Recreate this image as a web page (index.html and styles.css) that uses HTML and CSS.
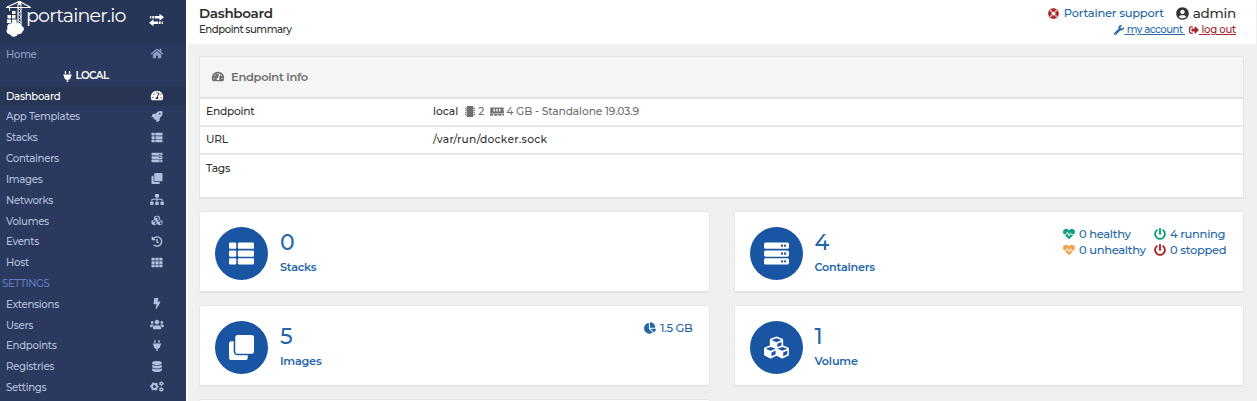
FILE: index.html
```html
<!DOCTYPE html>
<html lang="en">
<head>
<meta charset="utf-8">
<title>Portainer</title>
<link rel="stylesheet" href="styles.css">
</head>
<body>
<svg class="sprite" aria-hidden="true">
<symbol id="home" viewBox="0 0 576 512"><path d="M280.37 148.26L96 300.11V464a16 16 0 0 0 16 16l112.06-.29a16 16 0 0 0 15.92-16V368a16 16 0 0 1 16-16h64a16 16 0 0 1 16 16v95.64a16 16 0 0 0 16 16.05L464 480a16 16 0 0 0 16-16V300L295.67 148.26a12.19 12.19 0 0 0-15.3 0zM571.6 251.47L488 182.56V44.05a12 12 0 0 0-12-12h-56a12 12 0 0 0-12 12v72.61L318.47 43a48 48 0 0 0-61 0L4.34 251.47a12 12 0 0 0-1.6 16.9l25.5 31A12 12 0 0 0 45.15 301l235.22-193.74a12.19 12.19 0 0 1 15.3 0L530.9 301a12 12 0 0 0 16.9-1.6l25.5-31a12 12 0 0 0-1.7-16.93z"/></symbol>
<symbol id="plug" viewBox="0 0 384 512"><path d="M320,32a32,32,0,0,0-64,0v96h64Zm48,128H16A16,16,0,0,0,0,176v32a16,16,0,0,0,16,16H32v32A160.07,160.07,0,0,0,160,412.8V512h64V412.8A160.07,160.07,0,0,0,352,256V224h16a16,16,0,0,0,16-16V176A16,16,0,0,0,368,160ZM128,32a32,32,0,0,0-64,0v96h64Z"/></symbol>
<symbol id="gauge" viewBox="0 0 576 512"><path d="M288 32C128.94 32 0 160.94 0 320c0 52.8 14.25 102.26 39.06 144.8 5.61 9.62 16.3 15.2 27.44 15.2h443c11.14 0 21.83-5.58 27.44-15.2C561.75 422.26 576 372.8 576 320c0-159.06-128.94-288-288-288zm0 64c14.71 0 26.58 10.13 30.32 23.65-1.11 2.26-2.64 4.23-3.45 6.67l-9.22 27.67c-5.13 3.49-10.97 6.01-17.64 6.01-17.67 0-32-14.33-32-32S270.33 96 288 96zM96 384c-17.67 0-32-14.33-32-32s14.33-32 32-32 32 14.33 32 32-14.33 32-32 32zm48-160c-17.67 0-32-14.33-32-32s14.33-32 32-32 32 14.33 32 32-14.33 32-32 32zm246.77-72.41l-61.33 184C343.13 347.33 352 364.54 352 384c0 11.72-3.38 22.55-8.88 32H232.88c-5.5-9.45-8.88-20.28-8.88-32 0-33.94 26.5-61.43 59.9-63.59l61.34-184.01c4.17-12.56 17.73-19.45 30.36-15.17 12.57 4.19 19.35 17.79 15.17 30.36zm14.66 57.2l15.52-46.55c3.47-1.29 7.13-2.23 11.05-2.23 17.67 0 32 14.33 32 32s-14.33 32-32 32c-11.38-.01-20.89-6.28-26.57-15.22zM480 384c-17.67 0-32-14.33-32-32s14.33-32 32-32 32 14.33 32 32-14.33 32-32 32z"/></symbol>
<symbol id="rocket" viewBox="0 0 512 512"><path d="M505.12 19.09c-1.19-5.53-6.66-11-12.2-12.18C460.716 0 435.507 0 410.407 0 307.175 0 245.269 55.203 199.052 128H94.838c-16.348.016-35.557 11.875-42.887 26.484L2.516 253.297A28.4 28.4 0 0 0 0 264a24 24 0 0 0 24 24h103.816l-22.474 22.469c-11.366 11.361-12.997 32.258 0 45.25l50.904 50.906c11.156 11.187 32.156 13.156 45.277 0l22.475-22.469V488a24 24 0 0 0 24 24 28.56 28.56 0 0 0 10.707-2.516l98.728-49.39c14.63-7.297 26.508-26.5 26.508-42.86V312.797c72.598-46.313 128.035-108.406 128.035-211.094.1-25.203.1-50.406-6.856-82.61zM384.04 168A40 40 0 1 1 424.05 128a40 40 0 0 1-40.01 40z"/></symbol>
<symbol id="list" viewBox="0 0 512 512"><rect y="32" width="149" height="128" rx="24"/><rect y="192" width="149" height="128" rx="24"/><rect y="352" width="149" height="128" rx="24"/><rect x="181" y="32" width="331" height="128" rx="24"/><rect x="181" y="192" width="331" height="128" rx="24"/><rect x="181" y="352" width="331" height="128" rx="24"/></symbol>
<symbol id="server" viewBox="0 0 512 512"><path fill-rule="evenodd" d="M32 32h448a32 32 0 0 1 32 32v64a32 32 0 0 1-32 32H32a32 32 0 0 1-32-32V64a32 32 0 0 1 32-32zm336 40a24 24 0 1 0 0 48 24 24 0 0 0 0-48zm64 0a24 24 0 1 0 0 48 24 24 0 0 0 0-48zM32 192h448a32 32 0 0 1 32 32v64a32 32 0 0 1-32 32H32a32 32 0 0 1-32-32v-64a32 32 0 0 1 32-32zm336 40a24 24 0 1 0 0 48 24 24 0 0 0 0-48zm64 0a24 24 0 1 0 0 48 24 24 0 0 0 0-48zM32 352h448a32 32 0 0 1 32 32v64a32 32 0 0 1-32 32H32a32 32 0 0 1-32-32v-64a32 32 0 0 1 32-32zm336 40a24 24 0 1 0 0 48 24 24 0 0 0 0-48zm64 0a24 24 0 1 0 0 48 24 24 0 0 0 0-48z"/></symbol>
<symbol id="clone" viewBox="0 0 512 512"><path d="M464 0c26.51 0 48 21.49 48 48v288c0 26.51-21.49 48-48 48H176c-26.51 0-48-21.49-48-48V48c0-26.51 21.49-48 48-48h288M176 416c-44.112 0-80-35.888-80-80V128H48c-26.51 0-48 21.49-48 48v288c0 26.51 21.49 48 48 48h288c26.51 0 48-21.49 48-48v-48H176z"/></symbol>
<symbol id="sitemap" viewBox="0 0 640 512"><path d="M128 352H32c-17.67 0-32 14.33-32 32v96c0 17.67 14.33 32 32 32h96c17.67 0 32-14.33 32-32v-96c0-17.67-14.33-32-32-32zm-24-80h192v48h48v-48h192v48h48v-57.59c0-21.17-17.23-38.41-38.41-38.41H344v-64h40c17.67 0 32-14.33 32-32V32c0-17.67-14.33-32-32-32H256c-17.67 0-32 14.33-32 32v96c0 17.67 14.33 32 32 32h40v64H94.41C73.23 224 56 241.23 56 262.41V320h48v-48zm264 80h-96c-17.67 0-32 14.33-32 32v96c0 17.67 14.33 32 32 32h96c17.67 0 32-14.33 32-32v-96c0-17.67-14.33-32-32-32zm240 0h-96c-17.67 0-32 14.33-32 32v96c0 17.67 14.33 32 32 32h96c17.67 0 32-14.33 32-32v-96c0-17.67-14.33-32-32-32z"/></symbol>
<symbol id="cubes" viewBox="0 0 512 512"><path d="M488.6 250.2L392 214V105.5c0-15-9.3-28.4-23.4-33.7l-100-37.5c-8.1-3.1-17.1-3.1-25.3 0l-100 37.5c-14.1 5.3-23.4 18.7-23.4 33.7V214l-96.6 36.2C9.3 255.5 0 268.9 0 283.9V394c0 13.6 7.7 26.1 19.9 32.2l100 50c10.1 5.1 22.1 5.1 32.2 0l103.9-52 103.9 52c10.1 5.1 22.1 5.1 32.2 0l100-50c12.2-6.1 19.9-18.6 19.9-32.2V283.9c0-15-9.3-28.4-23.4-33.7zM358 214.8l-85 31.9v-68.2l85-37v73.3zM154 104.1l102-38.2 102 38.2v.6l-102 41.4-102-41.4v-.6zm84 291.1l-85 42.5v-79.1l85-38.8v75.4zm0-112l-102 41.4-102-41.4v-.6l102-38.2 102 38.2v.6zm240 112l-85 42.5v-79.1l85-38.8v75.4zm0-112l-102 41.4-102-41.4v-.6l102-38.2 102 38.2v.6z"/></symbol>
<symbol id="history" viewBox="0 0 512 512"><path d="M504 255.531c.253 136.64-111.18 248.372-247.82 248.468-59.015.042-113.223-20.53-155.822-54.911-11.077-8.94-11.905-25.541-1.839-35.607l11.267-11.267c8.609-8.609 22.353-9.551 31.891-1.984C173.062 425.135 212.781 440 256 440c101.705 0 184-82.311 184-184 0-101.705-82.311-184-184-184-48.814 0-93.149 18.969-126.068 49.932l50.754 50.754c10.08 10.08 2.941 27.314-11.313 27.314H24c-8.837 0-16-7.163-16-16V38.627c0-14.254 17.234-21.393 27.314-11.314l49.372 49.372C129.209 34.136 189.552 8 256 8c136.81 0 247.747 110.78 248 247.531zm-180.912 78.784l9.823-12.63c8.138-10.463 6.253-25.542-4.21-33.679L288 256.349V152c0-13.255-10.745-24-24-24h-16c-13.255 0-24 10.745-24 24v135.651l65.409 50.874c10.463 8.137 25.541 6.253 33.679-4.21z"/></symbol>
<symbol id="grid" viewBox="0 0 512 512"><path d="M24 32h101a24 24 0 0 1 24 24v80a24 24 0 0 1-24 24H24a24 24 0 0 1-24-24V56a24 24 0 0 1 24-24zM0 192h149v128H0zM24 352h125v128H24a24 24 0 0 1-24-24v-104zM181 32h150v128H181zM181 192h150v128H181zM181 352h150v128H181zM363 32h125a24 24 0 0 1 24 24v104H363zM363 192h149v128H363zM363 352h149v104a24 24 0 0 1-24 24H363z"/></symbol>
<symbol id="bolt" viewBox="0 0 320 512"><path d="M296 160H180.6l42.6-129.8C227.2 15 215.7 0 200 0H56C44 0 33.8 8.9 32.2 20.8l-32 240C-1.7 275.2 9.5 288 24 288h118.7L96.6 482.5c-3.6 15.2 8 29.5 23.3 29.5 8.4 0 16.4-4.4 20.8-12l176-304c9.3-15.9-2.2-36-20.7-36z"/></symbol>
<symbol id="users" viewBox="0 0 640 512"><path d="M96 224c35.3 0 64-28.7 64-64s-28.7-64-64-64-64 28.7-64 64 28.7 64 64 64zm448 0c35.3 0 64-28.7 64-64s-28.7-64-64-64-64 28.7-64 64 28.7 64 64 64zm32 32h-64c-17.6 0-33.5 7.1-45.1 18.6 40.3 22.1 68.9 62 75.1 109.4h66c17.7 0 32-14.3 32-32v-32c0-35.3-28.7-64-64-64zm-256 0c61.9 0 112-50.1 112-112S381.9 32 320 32 208 82.1 208 144s50.1 112 112 112zm76.8 32h-8.3c-20.8 10-43.9 16-68.5 16s-47.6-6-68.5-16h-8.3C179.6 288 128 339.6 128 403.2V432c0 26.5 21.5 48 48 48h288c26.5 0 48-21.5 48-48v-28.8c0-63.6-51.6-115.2-115.2-115.2zm-223.7-13.4C161.5 263.1 145.6 256 128 256H64c-35.3 0-64 28.7-64 64v32c0 17.7 14.3 32 32 32h65.9c6.3-47.4 34.9-87.3 75.2-109.4z"/></symbol>
<symbol id="database" viewBox="0 0 448 512"><path d="M448 73.143v45.714C448 159.143 347.667 192 224 192S0 159.143 0 118.857V73.143C0 32.857 100.333 0 224 0s224 32.857 224 73.143zM448 176v102.857C448 319.143 347.667 352 224 352S0 319.143 0 278.857V176c48.125 33.143 136.208 48.572 224 48.572S399.874 209.143 448 176zm0 160v102.857C448 479.143 347.667 512 224 512S0 479.143 0 438.857V336c48.125 33.143 136.208 48.572 224 48.572S399.874 369.143 448 336z"/></symbol>
<symbol id="cogs" viewBox="0 0 640 512"><g fill="none" stroke="currentColor"><circle cx="200" cy="256" r="115" stroke-width="90"/><circle cx="200" cy="256" r="172" stroke-width="56" stroke-dasharray="90 90.1" stroke-dashoffset="45"/><circle cx="520" cy="120" r="60" stroke-width="58"/><circle cx="520" cy="120" r="94" stroke-width="40" stroke-dasharray="49 49.400"/><circle cx="520" cy="392" r="60" stroke-width="58"/><circle cx="520" cy="392" r="94" stroke-width="40" stroke-dasharray="49 49.400"/></g></symbol>
<symbol id="lifering" viewBox="0 0 512 512"><path d="M256 8C119.033 8 8 119.033 8 256s111.033 248 248 248 248-111.033 248-248S392.967 8 256 8zm173.696 119.559l-63.399 63.399c-10.987-18.559-26.67-34.252-45.255-45.255l63.399-63.399a218.396 218.396 0 0 1 45.255 45.255zM256 352c-53.019 0-96-42.981-96-96s42.981-96 96-96 96 42.981 96 96-42.981 96-96 96zM127.559 82.304l63.399 63.399c-18.559 10.987-34.252 26.67-45.255 45.255l-63.399-63.399a218.372 218.372 0 0 1 45.255-45.255zM82.304 384.441l63.399-63.399c10.987 18.559 26.67 34.252 45.255 45.255l-63.399 63.399a218.396 218.396 0 0 1-45.255-45.255zm302.137 45.255l-63.399-63.399c18.559-10.987 34.252-26.67 45.255-45.255l63.399 63.399a218.403 218.403 0 0 1-45.255 45.255z"/></symbol>
<symbol id="user" viewBox="0 0 496 512"><path d="M248 8C111 8 0 119 0 256s111 248 248 248 248-111 248-248S385 8 248 8zm0 96c48.6 0 88 39.4 88 88s-39.4 88-88 88-88-39.4-88-88 39.4-88 88-88zm0 344c-58.7 0-111.3-26.6-146.5-68.2 18.8-35.4 55.6-59.8 98.5-59.8 2.4 0 4.8.4 7.1 1.1 13 4.2 26.6 6.9 40.9 6.9 14.3 0 28-2.7 40.9-6.9 2.3-.7 4.7-1.1 7.1-1.1 42.9 0 79.7 24.4 98.5 59.8C359.3 421.4 306.7 448 248 448z"/></symbol>
<symbol id="wrench" viewBox="0 0 512 512"><path d="M507.73 109.1c-2.24-9.03-13.54-12.09-20.12-5.51l-74.36 74.36-67.88-11.31-11.31-67.88 74.36-74.36c6.62-6.62 3.43-17.9-5.66-20.16-47.38-11.74-99.55.91-136.58 37.93-39.64 39.64-50.55 97.1-34.05 147.2L18.74 402.76c-24.99 24.99-24.99 65.51 0 90.5 24.99 24.99 65.51 24.99 90.5 0l213.21-213.21c50.12 16.71 107.47 5.68 147.37-34.22 37.07-37.07 49.7-89.32 37.91-136.73zM64 472c-13.25 0-24-10.75-24-24 0-13.26 10.75-24 24-24s24 10.74 24 24c0 13.25-10.75 24-24 24z"/></symbol>
<symbol id="signout" viewBox="0 0 512 512"><path d="M497 273L329 441c-15 15-41 4.5-41-17v-96H152c-13.3 0-24-10.7-24-24v-96c0-13.3 10.7-24 24-24h136V88c0-21.4 25.9-32 41-17l168 168c9.3 9.4 9.3 24.6 0 34zM192 436v-40c0-6.6-5.4-12-12-12H96c-17.7 0-32-14.3-32-32V160c0-17.7 14.3-32 32-32h84c6.6 0 12-5.4 12-12V76c0-6.6-5.4-12-12-12H96c-53 0-96 43-96 96v192c0 53 43 96 96 96h84c6.6 0 12-5.4 12-12z"/></symbol>
<symbol id="heart" viewBox="0 0 512 512"><path d="M320.2 243.8l-49.7 99.4c-6 12.1-23.4 11.7-28.9-.6l-56.9-126.3-30 71.7H60.6l182.5 186.5c7.1 7.3 18.6 7.3 25.7 0L451.4 288H342.3l-22.1-44.2zM473.7 73.9l-2.4-2.5c-51.5-52.6-135.8-52.6-187.4 0L256 100l-27.9-28.5c-51.5-52.7-135.9-52.7-187.4 0l-2.4 2.4C-10.4 123.7-12.5 203 31 256h102.4l35.9-86.2c5.4-12.9 23.6-13.1 29.3-.4l58.2 129.3 49-97.9c5.9-11.8 22.7-11.8 28.6 0l27.6 55.2H481c43.5-53 41.4-132.3-7.3-182.1z"/></symbol>
<symbol id="power" viewBox="0 0 512 512"><path d="M400 54.1c63 45 104 118.6 104 201.9 0 136.8-110.8 247.7-247.5 248C120 504.3 8.2 393 8 256.4 7.9 173.1 48.9 99.3 111.8 54.2c11.7-8.3 28-4.8 35 7.7L162.6 90c5.9 10.5 3.1 23.8-6.6 31-41.5 30.8-68 79.6-68 134.9-.1 92.3 74.5 168.1 168 168.1 91.6 0 168.6-74.2 168-169.1-.3-51.8-24.7-101.8-68.1-134-9.7-7.2-12.4-20.5-6.5-30.9l15.8-28.1c7-12.4 23.2-16.1 34.8-7.8zM296 264V24c0-13.3-10.7-24-24-24h-32c-13.3 0-24 10.7-24 24v240c0 13.3 10.7 24 24 24h32c13.3 0 24-10.7 24-24z"/></symbol>
<symbol id="pie" viewBox="0 0 544 512"><path d="M527.79 288H290.5l158.03 158.03c6.04 6.04 15.98 6.53 22.19.68 38.7-36.46 65.32-85.61 73.13-140.86 1.34-9.46-6.51-17.85-16.06-17.85zm-15.83-64.8C503.72 103.74 408.26 8.28 288.8.04 279.68-.59 272 7.1 272 16.24V240h223.77c9.14 0 16.82-7.68 16.19-16.8zM224 288V50.71c0-9.55-8.39-17.4-17.84-16.06C86.99 51.49-4.1 155.6.14 280.37 4.5 408.51 114.83 513.59 243.03 511.98c50.4-.63 96.97-16.87 135.26-44.03 7.9-5.6 8.42-17.23 1.57-24.08L224 288z"/></symbol>
<symbol id="chip" viewBox="0 0 512 512"><rect x="96" width="320" height="512" rx="48"/><path d="M24 86h48v52H24zM24 182h48v52H24zM24 278h48v52H24zM24 374h48v52H24zM440 86h48v52h-48zM440 182h48v52h-48zM440 278h48v52h-48zM440 374h48v52h-48z"/></symbol>
<symbol id="memory" viewBox="0 0 640 512"><path fill-rule="evenodd" d="M0 130V96a32 32 0 0 1 32-32h576a32 32 0 0 1 32 32v34c-38 16-38 76 0 92v98H0v-98c38-16 38-76 0-92zm160-2v128h64V128zm128 0v128h64V128zm128 0v128h64V128zM0 352h640v96h-64v-48h-64v48H384v-48h-64v48H192v-48h-64v48H0z"/></symbol>
</svg>

<div class="app">
  <aside class="sidebar">
    <header class="brand">
      <svg class="logo" width="36" height="40" viewBox="0 0 36 40">
        <g fill="none" stroke="#fff">
          <path d="M18 4v22M21 4v22" stroke-width="1.1"/>
          <path d="M18 8l3 3-3 3 3 3-3 3 3 3" stroke-width=".8"/>
          <path d="M6 7.500h25M7 7l12.500-5.500L30 7" stroke-width="1.2"/>
          <path d="M9.500 8v3" stroke-width="1"/>
        </g>
        <g fill="#fff">
          <path d="M18 1h3v4h-3z"/>
          <path d="M12 11h3.500v3H12zM7.500 15h3.500v3.500H7.500zM12 15h3.500v3.500H12zM7 19.500h4v3.500H7zM12 19.500h4.500v3.500H12z"/>
          <path d="M10 34.500a3.500 3.500 0 0 1-2.500-6 3.500 3.500 0 0 1 3.500-5 4 4 0 0 1 6-.5 3.500 3.500 0 0 1 4.500 3 3 3 0 0 1 1 5.500 3.500 3.500 0 0 1-4.500 2.500 4.500 4.500 0 0 1-8 .5z"/>
        </g>
      </svg>
      <span class="logo-text">portainer.io</span>
      <svg class="toggle" width="15" height="14" viewBox="0 0 15 14"><path fill="#fff" d="M1 3h1.300v2.500H1zM3.300 3h2v2.500h-2zM6 3h4.500V.7L15 4.200l-4.500 3.600V5.500H6zM14 8.500h-1.300V11H14zM11.700 8.500h-2V11h2zM9 8.500H4.500V6.200L0 9.700l4.500 3.600V11H9z"/></svg>
    </header>
    <nav class="menu">
      <a class="item home">Home<svg class="fa"><use href="#home"/></svg></a>
      <div class="endpoint"><svg class="fa"><use href="#plug"/></svg>LOCAL</div>
      <a class="item active">Dashboard<svg class="fa"><use href="#gauge"/></svg></a>
      <a class="item">App Templates<svg class="fa"><use href="#rocket"/></svg></a>
      <a class="item">Stacks<svg class="fa"><use href="#list"/></svg></a>
      <a class="item">Containers<svg class="fa"><use href="#server"/></svg></a>
      <a class="item">Images<svg class="fa"><use href="#clone"/></svg></a>
      <a class="item">Networks<svg class="fa"><use href="#sitemap"/></svg></a>
      <a class="item">Volumes<svg class="fa"><use href="#cubes"/></svg></a>
      <a class="item">Events<svg class="fa"><use href="#history"/></svg></a>
      <a class="item">Host<svg class="fa"><use href="#grid"/></svg></a>
      <div class="section">SETTINGS</div>
      <a class="item">Extensions<svg class="fa"><use href="#bolt"/></svg></a>
      <a class="item">Users<svg class="fa"><use href="#users"/></svg></a>
      <a class="item">Endpoints<svg class="fa"><use href="#plug"/></svg></a>
      <a class="item">Registries<svg class="fa"><use href="#database"/></svg></a>
      <a class="item">Settings<svg class="fa"><use href="#cogs"/></svg></a>
    </nav>
  </aside>

  <main class="main">
    <header class="topbar">
      <div>
        <div class="title">Dashboard</div>
        <div class="subtitle">Endpoint summary</div>
      </div>
      <div class="account">
        <div class="account-row">
          <a class="support"><svg class="fa red"><use href="#lifering"/></svg>Portainer support</a>
          <span class="admin"><svg class="fa"><use href="#user"/></svg>admin</span>
        </div>
        <div class="account-links">
          <a class="link"><svg class="fa"><use href="#wrench"/></svg><u>&nbsp;my account&nbsp;</u></a>
          <a class="link danger"><svg class="fa"><use href="#signout"/></svg><u>&nbsp;log out</u></a>
        </div>
      </div>
    </header>

    <section class="panel">
      <div class="panel-head"><svg class="fa"><use href="#gauge"/></svg>Endpoint info</div>
      <div class="row"><span class="key">Endpoint</span><span class="val">local</span><span class="specs"><svg class="fa chip"><use href="#chip"/></svg>2<svg class="fa mem"><use href="#memory"/></svg>4 GB - Standalone 19.03.9</span></div>
      <div class="row"><span class="key">URL</span><span class="val url">/var/run/docker.sock</span></div>
      <div class="row tags"><span class="key">Tags</span></div>
    </section>

    <section class="cards">
      <a class="card"><span class="circle"><svg class="fa"><use href="#list"/></svg></span><div><div class="count">0</div><div class="label">Stacks</div></div></a>
      <a class="card"><span class="circle"><svg class="fa"><use href="#server"/></svg></span><div><div class="count">4</div><div class="label">Containers</div></div>
        <div class="stats">
          <span class="stat"><svg class="fa green"><use href="#heart"/></svg>0 healthy</span><span class="stat"><svg class="fa green"><use href="#power"/></svg>4 running</span>
          <span class="stat"><svg class="fa orange"><use href="#heart"/></svg>0 unhealthy</span><span class="stat"><svg class="fa red"><use href="#power"/></svg>0 stopped</span>
        </div>
      </a>
      <a class="card"><span class="circle"><svg class="fa"><use href="#clone"/></svg></span><div><div class="count">5</div><div class="label">Images</div></div>
        <div class="stats size"><span class="stat"><svg class="fa"><use href="#pie"/></svg>1.5 GB</span></div>
      </a>
      <a class="card"><span class="circle"><svg class="fa"><use href="#cubes"/></svg></span><div><div class="count">1</div><div class="label">Volume</div></div></a>
      <a class="card"></a>
    </section>
  </main>
</div>
</body>
</html>
```

FILE: styles.css
```css
* { box-sizing: border-box; }
body {
  margin: 0;
  height: 401px;
  overflow: hidden;
  background: #f0f0f0;
  color: #333;
  font-family: Montserrat, Inter, "Liberation Sans", sans-serif;
  font-size: 11px;
}
.sprite { position: absolute; width: 0; height: 0; }
.fa { width: 14px; height: 11px; fill: currentColor; flex: none; }
.app { display: flex; height: 401px; overflow: hidden; }

/* Sidebar */
.sidebar { width: 186px; flex: none; background: #2a395d; }
.brand {
  display: flex;
  height: 44px;
  background: #273557;
}
.logo { flex: none; }
.logo-text {
  width: 100px;
  margin-left: -10px;
  font-size: 19px;
  line-height: 32px;
  letter-spacing: -0.8px;
  color: #fff;
}
.toggle { margin: 13px 0 0 23px; flex: none; }
.menu { display: flex; flex-direction: column; }
.menu > * { height: 20.82px; line-height: 19.82px; padding-top: 1px; }
.menu .item {
  display: flex;
  align-items: center;
  justify-content: space-between;
  padding: 1px 22px 0 6px;
  color: #b2bfdc;
  font-weight: 500;
  font-size: 10.2px;
  letter-spacing: -0.3px;
}
.item .fa { margin-bottom: 2px; }
.menu .home { color: #8e9fcb; }
.menu .active { background: #273454; color: #fff; }
.menu .endpoint {
  display: flex;
  align-items: center;
  justify-content: center;
  gap: 3px;
  padding: 2px 14px 0 0;
  color: #fff;
  font-weight: 600;
  font-size: 10.3px;
  letter-spacing: -0.55px;
}
.endpoint .fa { width: 9px; height: 11px; }
.menu .section { padding-left: 2px; color: #5f7cbf; font-size: 10.3px; font-weight: 500; letter-spacing: -0.5px; }

/* Top bar */
.main { flex: 1; min-width: 0; border-left: 2px solid #fff; }
.topbar {
  display: flex;
  justify-content: space-between;
  height: 44px;
  margin-right: 1px;
  padding: 5px 20px 0 11px;
  background: #fff;
}
.title { font-size: 13.5px; line-height: 16px; font-weight: 600; color: #2d2d2d; letter-spacing: -0.3px; }
.subtitle { line-height: 17px; font-size: 10.2px; font-weight: 500; letter-spacing: -0.5px; }
.account-row { display: flex; justify-content: flex-end; align-items: center; height: 16px; gap: 12px; }
.support { display: flex; align-items: center; gap: 5px; color: #2367a8; font-size: 11.5px; font-weight: 500; letter-spacing: -0.23px; }
.support .fa { width: 11px; }
.admin { display: flex; align-items: center; gap: 4px; font-size: 13.5px; font-weight: 500; letter-spacing: -0.25px; }
.admin .fa { width: 13px; height: 13px; }
.account-links { display: flex; justify-content: flex-end; gap: 4px; line-height: 17px; }
.link { display: flex; align-items: center; color: #2b6cad; font-size: 10.2px; font-weight: 500; letter-spacing: -0.5px; }
.link .fa { width: 10px; height: 10px; }
.danger { color: #a4282c; }
.danger u { letter-spacing: -0.3px; }
.red { color: #ae2323; }
.green { color: #0fa37c; }
.orange { color: #f5a04c; }

/* Endpoint panel */
.panel {
  height: 143px;
  margin: 12px 13px 0 11px;
  background: #fff;
  border: 1px solid #e4e4e4;
  border-bottom-width: 2px;
}
.panel-head {
  display: flex;
  align-items: center;
  gap: 6px;
  height: 42px;
  padding: 0 0 1px 11px;
  background: #f5f5f5;
  border-bottom: 2px solid #e2e2e2;
  color: #6f6f6f;
  font-size: 11.5px;
  font-weight: 600;
  letter-spacing: -0.3px;
}
.row {
  display: flex;
  align-items: center;
  height: 28px;
  padding: 0 0 1px 6px;
  border-bottom: 2px solid #e8e8e8;
  color: #333;
  font-weight: 500;
  font-size: 10.7px;
  letter-spacing: -0.25px;
}
.row.tags { border-bottom: 0; padding-bottom: 2px; }
.key { width: 227px; }
.val { letter-spacing: 0; }
.url { letter-spacing: 0.27px; }
.specs { display: flex; align-items: center; color: #707070; padding-left: 5px; letter-spacing: -0.12px; }
.chip { margin-right: 1px; }
.mem { margin: 0 2px 0 6px; }

/* Summary cards */
.cards {
  display: grid;
  grid-template-columns: 1fr 1fr;
  gap: 12px 24px;
  margin: 12px 13px 0 11px;
}
.card {
  display: flex;
  align-items: flex-start;
  height: 82px;
  padding: 15px 16px 0 15px;
  background: #fff;
  border: 1px solid #e6e6e6;
  border-bottom-width: 2px;
  border-radius: 2px;
  color: #2367a8;
}
.circle {
  display: flex;
  align-items: center;
  justify-content: center;
  width: 53px;
  height: 53px;
  margin-right: 12px;
  border-radius: 50%;
  background: #1a55a3;
  color: #fff;
}
.circle .fa { width: 25px; height: 25px; }
.count { font-size: 22px; line-height: 32px; font-weight: 500; }
.label { font-size: 11.2px; line-height: 16px; font-weight: 600; letter-spacing: -0.2px; }
.stats {
  display: grid;
  grid-template-columns: 91px 73px;
  margin: -1px 0 0 auto;
  font-weight: 500;
}
.stat { display: flex; align-items: center; gap: 4px; height: 16px; font-size: 11.5px; letter-spacing: -0.3px; }
.stat .fa { width: 12px; height: 12px; }
.size { grid-template-columns: auto; }
```
